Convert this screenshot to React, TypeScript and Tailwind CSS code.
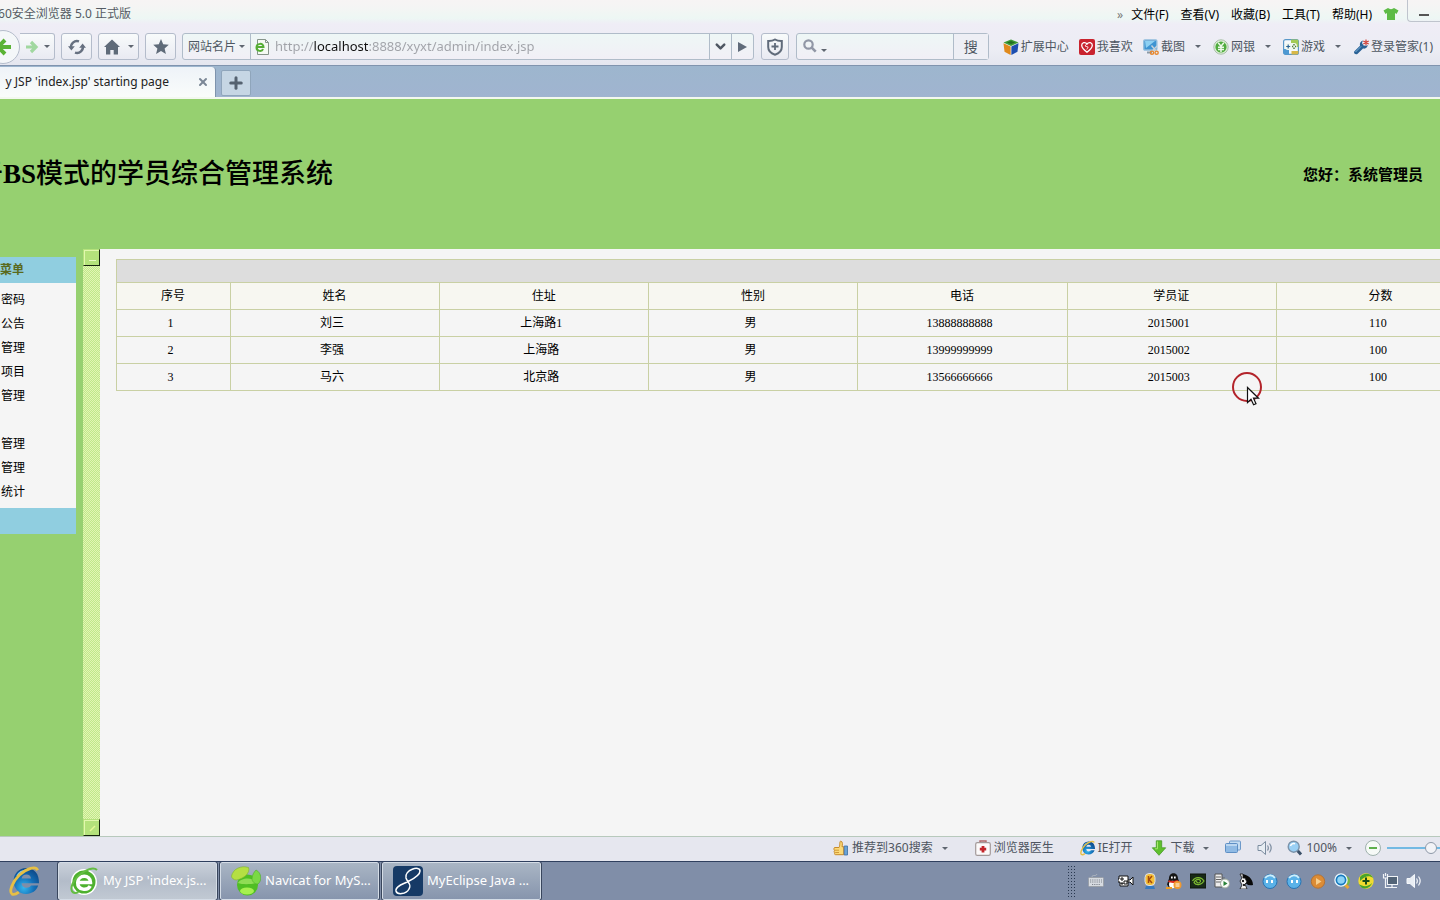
import React from "react";
import { ChevronDown, Plus, X } from "lucide-react";

type IconProps = { size?: string; box?: string; children: React.ReactNode };

function Icon({ size = "size-4", box = "0 0 16 16", children }: IconProps) {
  return (
    <svg className={`${size} shrink-0`} viewBox={box} fill="none" aria-hidden="true">
      {children}
    </svg>
  );
}

function Caret({ className = "text-[#5f6670]" }: { className?: string }) {
  return (
    <svg className={`h-[3px] w-[6px] shrink-0 ${className}`} viewBox="0 0 6 3" aria-hidden="true">
      <path d="M0 0h6L3 3z" fill="currentColor" />
    </svg>
  );
}

const IeIcon = ({ size }: { size?: string }) => (
  <Icon size={size}>
    <defs>
      <radialGradient id="ie-blue" cx=".4" cy=".75" r=".8">
        <stop offset="0" stopColor="#35b6ee" />
        <stop offset=".5" stopColor="#1470b8" />
        <stop offset="1" stopColor="#0d4584" />
      </radialGradient>
    </defs>
    <path
      d="M8.700 1.500C5 1.500 2.300 4.300 2.300 8s2.600 6.500 6.300 6.500c2.800 0 5.200-1.600 6-4.200H11c-.5.700-1.200 1.100-2.200 1.100-1.500 0-2.400-.9-2.500-2.300H15C15.200 4.500 12.700 1.500 8.700 1.500zM6.300 6.700C6.500 5.500 7.400 4.700 8.700 4.700s2.200.8 2.300 2z"
      fill="url(#ie-blue)"
    />
    <path d="M4 5.500C5 3.500 7 2.500 9.500 2.600" stroke="#7fc4ee" strokeWidth=".8" />
    <path d="M14.300 2.600C13.400.3 9 1.700 5.200 5 1.600 8.500-.1 13.300 1.500 14.500c.9.6 2.300-.1 3.400-.9" stroke="#e6bf45" strokeWidth="1.400" />
  </Icon>
);

const CubeIcon = () => (
  <Icon>
    <path d="M8 .5 15.500 3.500 8 7 .5 3.500z" fill="#3c9a35" />
    <path d="M.5 4.200 7.600 7.500V16L1.500 12.800z" fill="#e08a1c" />
    <path d="M15.500 4.200 8.400 7.500V16l6.100-3.200z" fill="#1d4fb0" />
    <path d="M4 3.400 8 2l4 1.400L8 5z" fill="#226e22" />
  </Icon>
);

const HeartIcon = () => (
  <Icon>
    <rect width="16" height="16" rx="2" fill="#c9232e" />
    <path d="M8 13.200C4 10.300 2.700 8.300 2.700 6.300 2.700 3.500 6.200 2.500 8 5c1.800-2.500 5.300-1.500 5.300 1.300 0 2-1.300 4-5.300 6.900z" stroke="#fff" strokeWidth="1.300" />
    <path d="M7.700 5 6 7l3.200 1-1.500 2.500" stroke="#fff" strokeWidth=".8" />
  </Icon>
);

const ShotIcon = () => (
  <Icon>
    <rect x=".8" y="1" width="13" height="10" rx="1" fill="#3e94d2" stroke="#8ebbdc" strokeWidth="1.400" />
    <path d="M2 2h10L3 9z" fill="#8ed0f2" />
    <path d="M4 13.500h5" stroke="#8a9ba9" strokeWidth="2" />
    <path d="m8.500 6.500 5 6M14 7l-5 5.500" stroke="#c8d2da" strokeWidth="1.400" />
    <circle cx="9" cy="13.700" r="1.600" stroke="#e6862c" strokeWidth="1.400" />
    <circle cx="13.600" cy="13.700" r="1.600" stroke="#e6862c" strokeWidth="1.400" />
  </Icon>
);

const BankIcon = () => (
  <Icon>
    <circle cx="8" cy="8" r="7.200" fill="#dff0d8" stroke="#a9bfa9" />
    <circle cx="8" cy="8" r="5.600" fill="#4fab3e" />
    <path d="m5.200 3.800 2.800 3.400 2.800-3.400M8 7v6M5 8.200h6M5 10.600h6" stroke="#eef8ea" strokeWidth="1.500" />
  </Icon>
);

const GameIcon = () => (
  <Icon>
    <rect x=".6" y=".6" width="14.800" height="14.800" rx="2" fill="#f7fafc" stroke="#5a98c8" strokeWidth="1.200" />
    <path d="M8 .6h6a1.400 1.400 0 0 1 1.400 1.400V8H8z" fill="#a4cb55" />
    <path d="M.6 10H6v5.400H2A1.400 1.400 0 0 1 .6 14z" fill="#4d99d3" />
    <path d="M8.500 12h6.900v2a1.400 1.400 0 0 1-1.400 1.400H8.500z" fill="#d8b847" />
    <rect x="2" y="4" width="12" height="7" rx="3" fill="#f1f8f0" />
    <path d="M3.200 7.500h4M5.200 5.500v4" stroke="#2d6395" strokeWidth="1.200" />
    <path d="M11 5v1.500M11 8.500V10M9 7.500h1.200M12 7.500h1.200" stroke="#4d7833" strokeWidth="1.400" />
  </Icon>
);

const WrenchIcon = () => (
  <Icon>
    <path d="M1.200 12.500 7 6.700C6.400 4.300 7.500 2 10 1.500L9 4l1.500 2.500 3 .3 1.200-1c.1 2.700-2.200 4.400-4.700 3.700l-5.600 5.600c-2 .9-4-.8-3.200-2.600z" fill="#2a6296" />
    <path d="m2.500 13 5.700-5.700" stroke="#79b1d9" />
    <path d="M13 .5v6M10.300 2l5.400 3M15.700 2l-5.400 3" stroke="#cf3a31" strokeWidth="1.100" />
  </Icon>
);

const ThumbIcon = () => (
  <Icon>
    <path
      d="M1.500 7.500H6C7.300 5.800 6.200 1.200 7.700 1.200c2.200 0 1.800 3.600 1.300 5.500h1.700v8H2.600c-1.300 0-1.100-1.200-.8-1.800-.9-.7-.8-1.600-.2-2.200-.9-.8-.8-2.800-.1-3.200z"
      fill="#fbd978"
      stroke="#c78a2a"
    />
    <path d="M2 10.200h4M2.200 12.500H6" stroke="#c78a2a" strokeWidth=".8" />
    <path d="M11.200 6h3.300v9h-3.300z" fill="#6aa3d6" stroke="#3c6fa5" strokeWidth=".8" />
  </Icon>
);

const DoctorIcon = () => (
  <Icon>
    <path d="M5 3V1h6v2" stroke="#b06a6a" strokeWidth="1.400" />
    <rect x=".7" y="2.700" width="14.600" height="12.600" rx="1.600" fill="#fcfafa" stroke="#a39a9a" strokeWidth="1.200" />
    <path d="M8 6v6.400M4.800 9.200h6.400" stroke="#c3262b" strokeWidth="2.800" />
  </Icon>
);

const DownloadIcon = () => (
  <Icon>
    <path d="M5.300.8h5.400v7h4L8 15.300 1.300 7.800h4z" fill="#5fc02e" stroke="#459a24" strokeWidth=".8" />
    <path d="M6.500 1.500v7.300H4" stroke="#a6e66e" />
  </Icon>
);

const WindowsIcon = () => (
  <Icon>
    <rect x="4.500" y="1" width="11" height="9" rx="1" fill="#c4dcf2" stroke="#6d99c9" />
    <rect x=".5" y="3.500" width="12" height="9" rx="1" fill="#8fbae4" stroke="#5e8fc4" />
    <path d="M1 5h11" stroke="#e8f3fc" />
  </Icon>
);

const SpeakerIcon = ({ color }: { color: string }) => (
  <Icon>
    <path d="M1 5.500h3L8.500 1.500v13L4 10.500H1z" fill="#e8edf3" stroke={color} />
    <path d="M10.500 5.500c1 1.500 1 3.500 0 5M12.500 3.500c2 2.700 2 6.300 0 9" stroke={color} strokeWidth="1.200" />
  </Icon>
);

const MagnifyIcon = () => (
  <Icon>
    <path d="m10 10 4 4.500" stroke="#3b5068" strokeWidth="3" />
    <circle cx="6.700" cy="6.700" r="5.500" fill="#9ad0f5" stroke="#7b93aa" strokeWidth="1.400" />
    <path d="M3.500 6c.5-2 2.500-3 4.500-2.200" stroke="#fff" strokeWidth="1.500" />
  </Icon>
);

const trayIcons: { name: string; art: React.ReactNode }[] = [
  { name: "摄像", art: <><path d="M1 3h9v10H2V9H0V6h1z" fill="#fff" stroke="#111" /><path d="M3 5h2v2H3zm3 3h3v3H6zM3 10h2v1H3zM10 7h2l3-3v8l-3-3h-2z" fill="#fff" stroke="#111" /></> },
  { name: "音乐", art: <><path d="M4 13h8l1 3H3z" fill="#3779c0" /><rect x="3" y=".5" width="10" height="12" rx="4" fill="#f5bd35" stroke="#d9e0ea" /><path d="M6.500 3v7M10 3 7 6.500l3 3.500" stroke="#a3490b" strokeWidth="1.500" /></> },
  { name: "QQ", art: <><path d="M3 5.500c0-7 9-7 9 0l2 6-2 3H3l-2-3z" fill="#161616" /><ellipse cx="6.500" cy="11.500" rx="3.500" ry="3.700" fill="#fff" /><path d="M5 3.500h1.700v2H5zm3 0h1.700v2H8z" fill="#fff" /><path d="M2.500 8c2 1.200 7 1.200 9.500 0" stroke="#df2d20" strokeWidth="2" /><path d="M0 15h6" stroke="#ec9b24" strokeWidth="2" /><circle cx="11.500" cy="12" r="4" fill="#f29a2f" /><path d="M9.500 11h4M9.500 13h4" stroke="#fff" /></> },
  { name: "显卡", art: <><rect y="1" width="16" height="14" fill="#182a17" stroke="#0c130b" /><path d="M2.500 8c3-5 9-4 11.500 0-3 4.700-8 4.500-10 1.700C6 5 11 6 10.500 8.500 9 11 6.500 10 6.500 8" stroke="#7cba31" strokeWidth="1.200" /></> },
  { name: "服务", art: <><path d="M1 1h7v13H1z" fill="#eee" stroke="#555" /><path d="M2 4h5M2 6.500h5M2 9h5M8 5h3" stroke="#666" /><circle cx="11" cy="10.500" r="4.500" fill="#f9fbf8" stroke="#9aa59a" /><path d="m9.500 8 4 2.500-4 2.500z" fill="#278136" /></> },
  { name: "天线", art: <><path d="M3 1c7 0 12 5 12 11-5 1-8-1-9-5z" fill="#090909" /><path d="M2 1h3v4h2l2 4-2 2 2 5H2l2-4-2-4 2-3z" fill="#eee" stroke="#111" strokeWidth=".8" /><path d="M4 7h2v2H4zm1 4h2v2H5z" fill="#222" /></> },
  { name: "旺旺", art: <><circle cx="8" cy="8.500" r="7" fill="#5ab2e8" stroke="#2774b4" /><path d="M3 5c2-3 7-4 10 0" stroke="#cdeffc" strokeWidth="2" /><path d="M5 7v3M10 7v3" stroke="#fff" strokeWidth="2" /></> },
  { name: "旺旺消息", art: <><circle cx="8" cy="8.500" r="7" fill="#5ab2e8" stroke="#2774b4" /><path d="M3 5c2-3 7-4 10 0" stroke="#cdeffc" strokeWidth="2" /><path d="M6 7v3M11 7v3" stroke="#fff" strokeWidth="2" /></> },
  { name: "播放器", art: <><circle cx="8" cy="8.500" r="6.700" fill="#dc8c35" stroke="#b37336" /><path d="m6 5 5.500 3.500L6 12z" fill="#f7cf8e" /></> },
  { name: "查找", art: <><circle cx="10.500" cy="8" r="5.500" fill="#77b843" /><path d="m10 10.500 4.500 4.500" stroke="#e7a536" strokeWidth="3" /><circle cx="7" cy="7" r="6" fill="#8cd3f6" stroke="#e8f4fb" strokeWidth="1.500" /><circle cx="7" cy="7" r="4.600" stroke="#1779bd" strokeWidth="1.600" /></> },
  { name: "安全卫士", art: <><circle cx="8" cy="8" r="7.700" fill="#f1dc30" /><path d="M2 4c4-5 11-4 13 1-4-3-8-2-13 3zM1 11c4 3 9 3 13-1-2 6-10 8-13 1z" fill="#47a42c" /><path d="M8 4.500v7M4.500 8h7" stroke="#174c18" strokeWidth="2" /></> },
  { name: "网络", art: <><rect x="5.500" y="3.500" width="10" height="8" fill="#536477" stroke="#f1f4f7" /><path d="M10 12v2M7 14.500h8M1.500 1v4h4V1M3.500 5v9.500H7M3.500 0v3" stroke="#f1f4f7" strokeWidth="1.200" /></> },
];

const students = [
  ["1", "刘三", "上海路1", "男", "13888888888", "2015001", "110"],
  ["2", "李强", "上海路", "男", "13999999999", "2015002", "100"],
  ["3", "马六", "北京路", "男", "13566666666", "2015003", "100"],
];
const columns = ["序号", "姓名", "住址", "性别", "电话", "学员证", "分数"];
const menuItems = ["密码", "公告", "管理", "项目", "管理", "", "管理", "管理", "统计"];

const toolButton =
  "flex h-[27px] shrink-0 items-center justify-center rounded-[3px] border border-[#b4bccb] bg-linear-to-b from-[#f8fbfb] to-[#e9eaf2] text-[#667080]";

function TitleBar() {
  return (
    <div className="flex h-7 items-start justify-between text-xs leading-[18px]">
      <div className="flex w-[131px] justify-end overflow-hidden pt-[5px] whitespace-nowrap text-[#555b63]">60安全浏览器 5.0 正式版</div>
      <div className="flex items-start text-black">
        <nav className="flex gap-3 pt-[6px] whitespace-nowrap" aria-label="浏览器菜单">
          <button className="-mr-1 text-[#777]" aria-label="更多">»</button>
          {["文件(F)", "查看(V)", "收藏(B)", "工具(T)", "帮助(H)"].map((m) => (
            <button key={m}>{m}</button>
          ))}
        </nav>
        <button className="mt-[6px] ml-[11px]" aria-label="皮肤">
          <Icon>
            <path d="M5 2c1.500 1.500 4.500 1.500 6 0l4.500 2.500-2 3.500-1.500-1v7H4V7L2.500 8l-2-3.500z" fill="#5dbb46" />
          </Icon>
        </button>
        <button className="ml-2 flex h-[22px] w-[33px] items-center justify-center rounded-bl border-b border-l border-[#bfc4cd] pt-2" aria-label="最小化">
          <span className="h-[2px] w-[10px] bg-[#555]" />
        </button>
      </div>
    </div>
  );
}

function Toolbar() {
  return (
    <div className="flex h-[37px] items-center overflow-hidden text-xs whitespace-nowrap text-[#4e5762]">
      <div className="flex w-5 shrink-0 justify-end overflow-hidden">
        <button className="flex size-[34px] shrink-0 items-center justify-center rounded-full border border-[#b4bccb] bg-[#f4f7f9]" aria-label="后退">
          <Icon size="size-5" box="0 0 20 20">
            <path d="m12 3-7 7 7 7M5 10h13" stroke="#5ab335" strokeWidth="4" />
          </Icon>
        </button>
      </div>
      <button className={`${toolButton} w-[35px] gap-1 rounded-l-none border-l-0`} aria-label="前进">
        <Icon>
          <path d="m7 3 5 5-5 5M12 8H2" stroke="#a1d8a0" strokeWidth="3.200" />
        </Icon>
        <Caret />
      </button>
      <button className={`${toolButton} ml-[6px] w-[31px]`} aria-label="刷新">
        <Icon size="size-[18px]" box="0 0 18 18">
          <path d="M3.200 10.500A6 6 0 0 1 11 3.400M14.800 7.500A6 6 0 0 1 7 14.600" stroke="#667080" strokeWidth="2.400" />
          <path d="M0 8.200h6.800L3.400 12.500zM18 9.800h-6.800l3.400-4.300z" fill="#667080" />
        </Icon>
      </button>
      <button className={`${toolButton} ml-[6px] w-[41px] gap-2`} aria-label="主页">
        <Icon>
          <path d="M8 .5 16 8h-2v7.500H9.700V11H6.300v4.500H2V8H0z" fill="#5f6b79" />
        </Icon>
        <Caret />
      </button>
      <button className={`${toolButton} ml-[6px] w-[31px]`} aria-label="收藏">
        <Icon>
          <path d="m8 0 2.200 5.300 5.600.5-4.200 3.700 1.300 5.600L8 12.100l-4.900 3 1.300-5.600L.2 5.800l5.600-.5z" fill="#5f6b79" />
        </Icon>
      </button>
      <div className="ml-[6px] flex h-[27px] grow items-center rounded-[3px] border border-[#b0bcc9] bg-linear-to-b from-[#eef7f6] to-[#f1eff6]">
        <button className="flex h-full w-[68px] shrink-0 items-center justify-center gap-[3px] border-r border-[#b0bcc9]">
          网站名片 <Caret />
        </button>
        <span className="ml-1">
          <Icon>
            <path d="M2.500.5h8l3 3v12h-11z" fill="#f5faf3" stroke="#86948a" />
            <path d="M10.500.5v3h3" stroke="#86948a" />
            <path d="M2 8h6.500C8.500 3.500 1.500 4 1.500 8.500c0 4 5.500 4.500 6.500 1.500" stroke="#55ad34" strokeWidth="2" />
          </Icon>
        </span>
        <input
          aria-label="地址"
          defaultValue="http://localhost:8888/xyxt/admin/index.jsp"
          className="ml-1 h-full min-w-0 grow bg-linear-[90deg,#a0a2a8_39px,#111_39px,#111_93px,#a0a2a8_93px] bg-clip-text pb-[2px] text-[13px] text-transparent outline-none"
        />
        <button className="flex h-full w-[22px] items-center justify-center border-l border-[#b0bcc9]" aria-label="历史地址">
          <ChevronDown className="size-[15px]" strokeWidth={4} />
        </button>
        <button className="flex h-full w-[22px] items-center justify-center border-l border-[#b0bcc9]" aria-label="转到">
          <svg className="h-[10px] w-[9px]" viewBox="0 0 9 10" aria-hidden="true"><path d="M0 0l9 5-9 5z" fill="#606b7a" /></svg>
        </button>
      </div>
      <button className={`${toolButton} ml-[7px] w-[28px]`} aria-label="安全">
        <Icon size="size-[18px]" box="0 0 18 18">
          <path d="M9 1.500c2 1.200 4.500 1.600 6.800 1.500v6c0 4-3 6.500-6.800 7.700C5.200 15.500 2.200 13 2.200 9V3C4.500 3.100 7 2.700 9 1.500z" stroke="#606b7a" strokeWidth="2" />
          <path d="M9 5v7M5.500 8.500h7" stroke="#606b7a" strokeWidth="1.800" />
        </Icon>
      </button>
      <form className="ml-[7px] flex h-[27px] w-[193px] shrink-0 items-center rounded-[3px] border border-[#b0bcc9] bg-linear-to-b from-[#eef7f6] to-[#f1eff6]" onSubmit={(e) => e.preventDefault()}>
        <span className="flex items-center gap-[2px] pl-[6px]">
          <Icon><circle cx="5.500" cy="5.500" r="4.200" stroke="#9197a6" strokeWidth="2.200" /><path d="m8.700 8.700 4 4" stroke="#9197a6" strokeWidth="2.600" /></Icon>
          <span className="pt-2"><Caret /></span>
        </span>
        <input aria-label="搜索" className="h-full min-w-0 grow bg-transparent px-1 outline-none" />
        <button className="h-full w-[35px] shrink-0 border-l border-[#b0bcc9] bg-[#eeeff5] text-sm">搜</button>
      </form>
      <div className="ml-[14px] flex shrink-0 items-center">
        <button className="flex items-center gap-[2px]"><CubeIcon />扩展中心</button>
        <button className="ml-[10px] flex items-center gap-[2px]"><HeartIcon />我喜欢</button>
        <button className="ml-[10px] flex items-center gap-[2px]"><ShotIcon />截图<span className="ml-[8px]"><Caret /></span></button>
        <button className="ml-3 flex items-center gap-[2px]"><BankIcon />网银<span className="ml-[8px]"><Caret /></span></button>
        <button className="ml-3 flex items-center gap-[2px]"><GameIcon />游戏<span className="ml-[8px]"><Caret /></span></button>
        <button className="ml-3 flex items-center gap-[2px] pr-[7px]"><WrenchIcon />登录管家(1)</button>
      </div>
    </div>
  );
}

function TabStrip() {
  return (
    <div className="flex h-[34px] items-end border-t border-[#8094ae] border-b-2 border-b-[#f3f8ef] bg-linear-to-b from-[#9db6ce] to-[#a0b4d0] text-xs text-[#222]">
      <div className="flex h-[30px] w-[216px] items-center justify-end overflow-hidden rounded-tr border-r border-[#7e93ad] bg-linear-to-b from-[#eef3f8] to-[#fafcfb] pr-[6px] whitespace-nowrap">
        <span>y JSP 'index.jsp' starting page</span>
        <button className="ml-[28px]" aria-label="关闭标签页"><X className="size-3 text-[#7b8796]" strokeWidth={4} /></button>
      </div>
      <button className="mb-[1px] ml-[5px] flex h-[26px] w-[30px] items-center justify-center rounded-[2px] border border-[#8fa5bb] bg-[#c6d6e4] text-[#556270]" aria-label="新建标签页">
        <Plus className="size-[18px]" strokeWidth={4} />
      </button>
    </div>
  );
}

function Sidebar() {
  return (
    <aside className="w-[83px] shrink-0 bg-[#96d070] pt-2 pr-[7px] text-xs">
      <h2 className="flex h-[26px] items-center bg-[#90cee0] font-bold text-[#5a6a1c]">菜单</h2>
      <ul className="bg-[#f5f5f5] pt-[5px] pb-1">
        {menuItems.map((item, i) => (
          <li key={i} className="flex h-6 items-center pl-px whitespace-nowrap text-black">
            {item && <a href="#menu">{item}</a>}
          </li>
        ))}
      </ul>
      <div className="h-[26px] bg-[#90cee0]" />
    </aside>
  );
}

const scrollButton =
  "flex h-[17px] border border-t-[#b4e27b] border-r-[#17240f] border-b-[#17240f] border-l-[#b4e27b] bg-[#b4e27b]";
const scrollButtonFace = "flex grow self-stretch justify-center border-t border-l border-[#e1f8ae]";

function Splitter() {
  return (
    <div className="flex w-[17px] shrink-0 flex-col justify-between bg-[#e3f5b4] bg-[conic-gradient(#bfe88a_25%,#e3f5b4_0_50%,#bfe88a_0_75%,#e3f5b4_0)] bg-size-[2px_2px]">
      <button className={scrollButton} aria-label="向上滚动">
        <span className={`${scrollButtonFace} items-end pb-1`}>
          <span className="h-px w-[7px] bg-[#e9fbc4]" />
        </span>
      </button>
      <button className={scrollButton} aria-label="向下滚动">
        <span className={`${scrollButtonFace} items-center`}>
          <svg className="size-[7px]" viewBox="0 0 7 7" aria-hidden="true"><path d="M1 6l5-5" stroke="#e6f996" strokeWidth="1.500" /></svg>
        </span>
      </button>
    </div>
  );
}

function StudentTable() {
  return (
    <div className="-mr-[46px]">
      <table className="w-full table-fixed border-collapse text-center font-['Liberation_Serif','Noto_Sans_CJK_SC',serif] text-xs leading-4 text-black">
        <colgroup>
          {columns.map((c, i) => (
            <col key={c} className={i === 0 ? "w-[114px]" : ""} />
          ))}
        </colgroup>
        <thead>
          <tr><td colSpan={7} className="h-[23px] border border-[#c9d0a4] bg-[#dddddd]" /></tr>
          <tr className="h-[27px] bg-[#f7f7f1]">
            {columns.map((c) => (
              <th key={c} className="border border-[#c9d0a4] py-0 pr-px pl-0 font-normal">{c}</th>
            ))}
          </tr>
        </thead>
        <tbody>
          {students.map((row) => (
            <tr key={row[0]} className="h-[27px]">
              {row.map((v, i) => (
                <td key={i} className="border border-[#c9d0a4] py-0 pr-[6px] pl-0">{v}</td>
              ))}
            </tr>
          ))}
        </tbody>
      </table>
    </div>
  );
}

function PointerMark() {
  return (
    <svg className="pointer-events-none absolute top-[122px] left-[1131px] h-[36px] w-[32px]" viewBox="0 0 32 36" fill="none" aria-hidden="true">
      <circle cx="16" cy="16" r="14" stroke="#b3242b" strokeWidth="2" />
      <path d="M16.500 16.500v15l3.500-3.300 2.600 5.600 2.400-1-2.500-5.600H27.500z" fill="#fff" stroke="#111" strokeWidth="1.200" />
    </svg>
  );
}

function StatusBar() {
  return (
    <div className="flex h-[25px] shrink-0 items-center justify-end border-t border-[#b7c9bc] bg-[#e6e7ef] pb-[2px] text-xs whitespace-nowrap text-[#4e5560]">
      <button className="flex items-center gap-[3px]"><ThumbIcon />推荐到360搜索<span className="ml-[6px]"><Caret /></span></button>
      <button className="ml-[27px] flex items-center gap-[3px]"><DoctorIcon />浏览器医生</button>
      <button className="ml-[26px] flex items-center gap-[2px]"><IeIcon />IE打开</button>
      <button className="ml-[19px] flex items-center gap-[3px]"><DownloadIcon />下载<span className="ml-[6px]"><Caret /></span></button>
      <button className="ml-4" aria-label="窗口"><WindowsIcon /></button>
      <button className="ml-4" aria-label="静音"><SpeakerIcon color="#7b8c9f" /></button>
      <button className="ml-[14px] flex items-center gap-[3px]"><MagnifyIcon />100%<span className="ml-[6px]"><Caret /></span></button>
      <button className="ml-[13px] flex size-4 items-center justify-center rounded-full border border-[#9fb2ad] bg-[#f6faf7]" aria-label="缩小"><span className="h-[2px] w-2 bg-[#5eb04d]" /></button>
      <div className="ml-[6px] w-[53px] overflow-hidden">
        <input
          type="range"
          aria-label="缩放"
          defaultValue={50}
          className="block h-4 w-[88px] appearance-none bg-[linear-gradient(#72b9e3,#72b9e3)] bg-size-[100%_2px] bg-center bg-no-repeat [&::-webkit-slider-thumb]:size-3 [&::-webkit-slider-thumb]:appearance-none [&::-webkit-slider-thumb]:rounded-full [&::-webkit-slider-thumb]:border [&::-webkit-slider-thumb]:border-[#8e99a8] [&::-webkit-slider-thumb]:bg-[#f2f3f7]"
        />
      </div>
    </div>
  );
}

const taskButton =
  "flex h-[38px] w-[159px] items-center rounded-[2px] border border-[#d4dce6] pl-[10px] text-[13px] whitespace-nowrap text-white outline outline-[#39465d]";

function TaskBar() {
  return (
    <footer className="flex h-[39px] shrink-0 items-center overflow-hidden border-t border-[#2f3f5e] bg-[#808ea8]">
      <button className="ml-[9px] w-[49px] shrink-0" aria-label="Internet Explorer"><IeIcon size="size-8" /></button>
      <div className="flex gap-[3px]">
        <button className={`${taskButton} bg-linear-to-b from-[#c9d0da] via-[#b3bcc9] to-[#c1c9d3]`}>
          <Icon size="size-[30px]" box="0 0 30 30">
            <circle cx="15" cy="16" r="13" fill="#fff" />
            <circle cx="15" cy="16" r="11.500" fill="#4db12e" />
            <path d="M8.500 16.500h13C21.500 8 9 8.500 8.700 16.500c-.2 8 10 8.500 12.500 3.500" stroke="#fff" strokeWidth="3.500" />
            <path d="M28 4C23-1 8 8 3.500 18c-2.500 6-.5 11 6 8" stroke="#64bd43" strokeWidth="2" />
          </Icon>
          <span className="ml-1">My JSP 'index.js...</span>
        </button>
        <button className={`${taskButton} bg-linear-to-b from-[#a9b5c4] to-[#8795ad]`}>
          <Icon size="size-[30px]" box="0 0 30 30">
            <circle cx="16.500" cy="19" r="10.500" fill="#4fbe23" />
            <path d="M7 17c3-6 16-6 19 0-4 1-14 2-19 0z" fill="#8fdc55" />
            <ellipse cx="16" cy="25" rx="7" ry="3.500" fill="#a6f04f" />
            <path d="M.5 10C2 3 10-1 17.500 1.500c2 5-4 11-12 12.500-3 0-5-2-5-4z" fill="#b5df43" stroke="#7cb32c" strokeWidth=".6" />
            <path d="M25 4c6 3 6 11 2 14-4 0-6-3-6-5 0-4 2-7 4-9z" fill="#7ad945" stroke="#4fae28" strokeWidth=".6" />
          </Icon>
          <span className="ml-1">Navicat for MyS...</span>
        </button>
        <button className={`${taskButton} bg-linear-to-b from-[#a9b5c4] to-[#8795ad]`}>
          <Icon size="size-[30px]" box="0 0 30 30">
            <rect width="30" height="30" rx="4" fill="#163a66" />
            <path d="M27 5C27-1 11 4 13 12c1.500 5 6 6 3 11-3 5.500-12 6-13 2-1-5 8-7 13-10 5-2.500 11-6 11-10z" stroke="#fff" strokeWidth="1.500" />
          </Icon>
          <span className="ml-1">MyEclipse Java ...</span>
        </button>
      </div>
      <div className="ml-auto flex shrink-0 items-center gap-2 pr-[18px]">
        <span className="h-8 w-[9px] bg-[radial-gradient(circle,#29384f_1px,transparent_1px)] bg-size-[3px_3px]" />
        <button className="mr-[6px] ml-1" aria-label="输入法">
          <Icon>
            <rect x=".5" y="4.500" width="15" height="9" rx="1" fill="#d7dbe1" stroke="#9aa0a8" />
            <path d="M2 7h12M2 9h12M4 11.500h8" stroke="#7d838c" strokeDasharray="1.200 1" />
            <path d="M4 4c0-3 4 0 5-3" stroke="#adb5bf" />
          </Icon>
        </button>
        {trayIcons.map((t) => (
          <button key={t.name} aria-label={t.name}><Icon>{t.art}</Icon></button>
        ))}
        <button aria-label="音量"><SpeakerIcon color="#f4f7fb" /></button>
      </div>
    </footer>
  );
}

export default function App() {
  return (
    <div className="flex min-h-screen flex-col overflow-hidden bg-[#f5f5f5] font-['Noto_Sans','Noto_Sans_CJK_SC',sans-serif]">
      <header className="shrink-0 bg-linear-[180deg,#f7f4f4_0px,#f4f5f4_8px,#edf7f4_18px,#efedf6_24px,#ecedf4_50px,#e4e6ef_65px]">
        <TitleBar />
        <Toolbar />
        <TabStrip />
      </header>
      <div className="flex h-[150px] shrink-0 items-center justify-between bg-[#96d070] text-black">
        <h1 className="flex w-[333px] justify-end overflow-hidden font-['Liberation_Serif','Noto_Sans_CJK_SC',serif] text-[27px] leading-9 font-medium whitespace-nowrap">
          于<span className="font-bold">BS</span>模式的学员综合管理系统
        </h1>
        <p className="pr-[17px] text-[15px] font-bold">您好：系统管理员</p>
      </div>
      <div className="flex grow">
        <Sidebar />
        <Splitter />
        <main className="relative min-w-0 grow overflow-hidden pt-[10px] pl-4">
          <StudentTable />
          <PointerMark />
        </main>
      </div>
      <StatusBar />
      <TaskBar />
    </div>
  );
}
